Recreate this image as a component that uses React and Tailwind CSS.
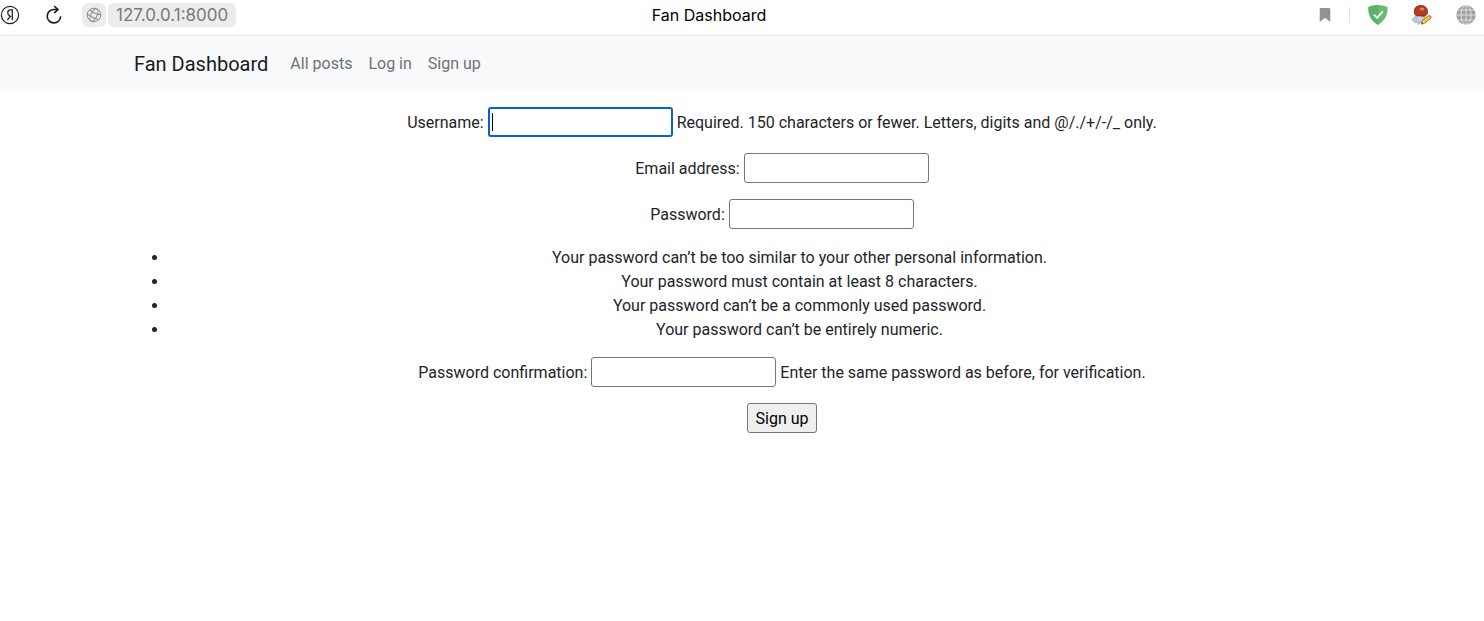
import React from "react";

function YandexIcon() {
  return (
    <svg width="20" height="20" viewBox="0 0 20 20" fill="none" stroke="#222" strokeWidth="1.2" aria-hidden="true">
      <circle cx="10" cy="10" r="8.6" />
      <path d="M12.3 15.2V4.9H10.6C8.8 4.9 7.7 6 7.7 7.7c0 1.5.8 2.4 2.2 3.3l1.3.8M10.3 11.2L7.4 15.2" strokeWidth="1.3" />
    </svg>
  );
}

function ReloadIcon() {
  return (
    <svg width="18" height="20" viewBox="0 0 18 20" fill="none" stroke="#1c1c1c" strokeWidth="1.6" aria-hidden="true">
      <path d="M15.6 11.2A6.7 6.7 0 1 1 9 4.5h3.4" />
      <path d="M9.2 1l3.7 3.6-3.7 3.5" />
    </svg>
  );
}

function SiteGlobeIcon() {
  return (
    <svg width="16" height="16" viewBox="0 0 16 16" fill="none" stroke="#8a8a8a" strokeWidth="1" aria-hidden="true">
      <circle cx="8" cy="8" r="6.8" />
      <g transform="rotate(25 8 8)">
        <ellipse cx="8" cy="8" rx="3" ry="6.8" />
        <path d="M2.2 5c3.500 1.200 8.100 1.200 11.600 0M1.500 9.800c4 1.200 9 1.200 13 0" />
      </g>
    </svg>
  );
}

function BookmarkIcon() {
  return (
    <svg width="12" height="14" viewBox="0 0 12 14" aria-hidden="true">
      <path d="M2 0h8a1.3 1.3 0 0 1 1.3 1.3V14L6 9.8.7 14V1.3A1.3 1.3 0 0 1 2 0z" fill="#929292" />
    </svg>
  );
}

function ShieldIcon() {
  return (
    <svg width="20" height="20" viewBox="0 0 20 20" aria-hidden="true">
      <path d="M10 0c3 0 6.7.7 9.6 2 0 3.4.4 11.8-9.6 18C0 13.800.4 5.4.4 2 3.3.7 7 0 10 0z" fill="#68bc71" />
      <path d="M10 0C7 0 3.3.7.4 2c0 3.4-.4 11.8 9.6 18z" fill="#5bb06a" />
      <path d="M5.8 9.6l3.3 3.3 5.7-6.6" fill="none" stroke="#fff" strokeWidth="1.8" />
    </svg>
  );
}

function MushroomIcon() {
  return (
    <svg width="20" height="20" viewBox="0 0 20 20" aria-hidden="true">
      <path d="M4.5 10.5C2.5 12 .5 13 .3 15.5l2.2.3.3 2 2.4-.5 1.3 2.2 2.500-2.300 2.5.3 2-6-4-1.500z" fill="#b9c9d9" stroke="#8999a9" strokeWidth=".6" />
      <path d="M2.3 6.5C2.3 2.500 5 .5 9 .5s6.5 2.500 6.5 6c0 2.500-1 4.300-3 4.500-2.500.3-6 .3-8-.3-1.500-.4-2.200-2-2.200-4.200z" fill="#b83a24" stroke="#6f2418" strokeWidth=".8" />
      <ellipse cx="10" cy="4" rx="2.400" ry="1.500" fill="#de8168" />
      <path d="M6 12h3.500M6.500 14h3" stroke="#dfe9f2" strokeWidth="1.2" />
      <path d="M9.3 19.2l1-3.700 6.500-5 2.500 2.500-6.500 5.200z" fill="#f2cb35" stroke="#8f7420" strokeWidth=".8" />
      <path d="M16.8 10.500l1-.8 2 2.400-.8.900z" fill="#e07b76" />
      <path d="M9.3 19.2l.5-1.700 1.200 1.200z" fill="#333" />
    </svg>
  );
}

function GlobeIcon() {
  return (
    <svg width="20" height="20" viewBox="0 0 20 20" aria-hidden="true">
      <circle cx="10" cy="10" r="9.7" fill="#a0a0a0" />
      <g fill="none" stroke="#e6e6e6" strokeWidth=".9">
        <path d="M10 .3v19.400M.3 10h19.400M2.200 5h15.600M2.200 15h15.600" />
        <ellipse cx="10" cy="10" rx="5" ry="9.7" />
      </g>
    </svg>
  );
}

const inputClass =
  "h-[30px] w-[185px] rounded-[3px] border border-[#767676] bg-white px-[3px] text-black caret-transparent outline-none focus:border-2 focus:border-[#0a5fd0]";

function Field({ id, label, type = "text", help, autoFocus }) {
  return (
    <div className="mb-4 flex items-center justify-center gap-1">
      <label htmlFor={id} className="pt-0.5">{label}:</label>
      <span className="relative flex">
        <input id={id} name={id} type={type} autoFocus={autoFocus} className={inputClass} />
        {autoFocus && <span className="pointer-events-none absolute top-1.5 left-1 h-[18px] w-px bg-black" />}
      </span>
      {help && <span className="pt-0.5">{help}</span>}
    </div>
  );
}

export default function App() {
  return (
    <div className="min-h-screen bg-white font-['Inter',sans-serif] text-base text-[#212529]">
      <header className="grid h-9 grid-cols-[1fr_auto_1fr] items-center border-b border-[#e9e9e9] pb-1.5">
        <div className="flex items-center">
          <button aria-label="Home"><YandexIcon /></button>
          <button aria-label="Reload" className="ml-[25px]"><ReloadIcon /></button>
          <button aria-label="Site information" className="ml-[19px] flex size-6 items-center justify-center rounded-md bg-[#ececec]">
            <SiteGlobeIcon />
          </button>
          <span className="ml-[2px] flex h-6 items-center rounded-md bg-[#ececec] px-2 pt-0.5 text-[17px] text-[#7a7a7a]">127.0.0.1:8000</span>
        </div>
        <div className="pr-[66px] text-black">Fan Dashboard</div>
        <div className="flex items-center justify-end pr-2">
          <button aria-label="Bookmark"><BookmarkIcon /></button>
          <span className="ml-[18px] h-4 w-px bg-[#e4e4e4]" />
          <button aria-label="Protection" className="ml-[18px]"><ShieldIcon /></button>
          <button aria-label="Extension" className="ml-6"><MushroomIcon /></button>
          <button aria-label="Translate" className="ml-6"><GlobeIcon /></button>
        </div>
      </header>

      <div className="font-['Roboto',sans-serif]">
        <nav className="flex h-[55px] items-center bg-[#f8f9fa] pl-[134px]">
          <a href="#" className="mr-[22px] text-xl text-[#191b1d]">Fan Dashboard</a>
          <div className="flex gap-4 text-[#707172]">
            <a href="#posts">All posts</a>
            <a href="#login">Log in</a>
            <a href="#signup">Sign up</a>
          </div>
        </nav>

        <main className="pt-4 pr-[54px] pl-[134px] text-center">
          <form>
            <Field id="username" label="Username" autoFocus help="Required. 150 characters or fewer. Letters, digits and @/./+/-/_ only." />
            <Field id="email" label="Email address" type="email" />
            <Field id="password1" label="Password" type="password" />
            <ul className="mb-[15px] list-disc pt-px pl-[35px] leading-6">
              <li>Your password can’t be too similar to your other personal information.</li>
              <li>Your password must contain at least 8 characters.</li>
              <li>Your password can’t be a commonly used password.</li>
              <li>Your password can’t be entirely numeric.</li>
            </ul>
            <Field id="password2" label="Password confirmation" type="password" help="Enter the same password as before, for verification." />
            <button type="button" className="h-[30px] rounded-[3px] border border-[#767676] bg-[#efefef] px-2 pt-0.5 text-black">Sign up</button>
          </form>
        </main>
      </div>
    </div>
  );
}
